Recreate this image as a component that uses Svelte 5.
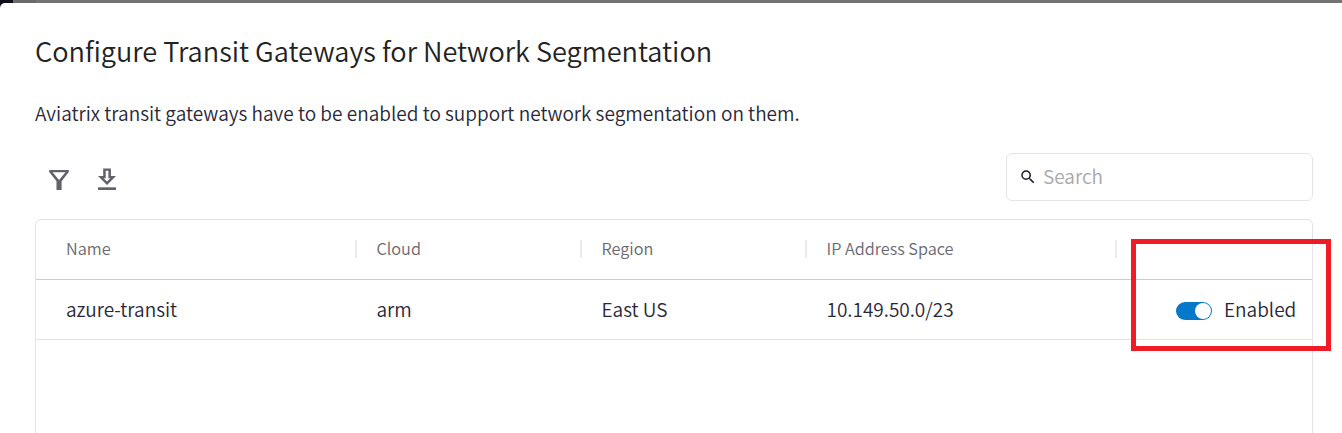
<script>
  const columns = ['Name', 'Cloud', 'Region', 'IP Address Space'];
  const gateways = [
    { name: 'azure-transit', cloud: 'arm', region: 'East US', cidr: '10.149.50.0/23', enabled: true }
  ];
</script>

<div class="page">
  <div class="backdrop"><i></i><b></b></div>
  <main class="dialog">
    <h1>Configure Transit Gateways for Network Segmentation</h1>
    <p>Aviatrix transit gateways have to be enabled to support network segmentation on them.</p>
    <div class="toolbar">
      <div class="tools">
        <svg width="24" height="24" viewBox="0 0 24 24" aria-label="Filter">
          <path fill-rule="evenodd" d="M2.2 2H21.8V4L14.6 13.2V22H9.5V13.2L2.2 4ZM5.6 4.2L12 12L18.5 4.2Z" fill="#63626b" />
        </svg>
        <svg width="24" height="24" viewBox="0 0 24 24" aria-label="Download">
          <path fill-rule="evenodd" d="M8.2 0.5H15.9V8H21L12 17L3 8H8.2ZM10.7 2.8V10.2H8.6L12 13.6L15.4 10.2H13.4V2.8Z" fill="#63626b" />
          <path d="M3 19.3H21V22H3Z" fill="#63626b" />
        </svg>
      </div>
      <label class="search">
        <svg width="18" height="18" viewBox="0 0 24 24" aria-hidden="true">
          <path fill="#1c1b29" d="M15.5 14h-.79l-.28-.27A6.47 6.47 0 0 0 16 9.5 6.5 6.5 0 1 0 9.5 16c1.61 0 3.09-.59 4.23-1.57l.27.28v.79l5 4.99L20.49 19l-4.99-5zm-6 0C7.01 14 5 11.99 5 9.5S7.01 5 9.5 5 14 7.01 14 9.5 11.99 14 9.5 14z" />
        </svg>
        <input type="text" placeholder="Search" />
      </label>
    </div>
    <section class="table">
      <div class="row head">
        {#each columns as column}
          <div class="cell">{column}</div>
        {/each}
        <div class="cell"></div>
      </div>
      {#each gateways as gateway}
        <div class="row">
          <div class="cell">{gateway.name}</div>
          <div class="cell">{gateway.cloud}</div>
          <div class="cell">{gateway.region}</div>
          <div class="cell">{gateway.cidr}</div>
          <div class="cell state">
            <span class="switch" class:on={gateway.enabled}></span>
            <span>{gateway.enabled ? 'Enabled' : 'Disabled'}</span>
          </div>
        </div>
      {/each}
      <div class="highlight"></div>
    </section>
  </main>
</div>

<style>
  :global(body) { background: #fff; overflow: hidden; }
  .page {
    height: 433px;
    overflow: hidden;
    box-sizing: border-box;
    padding-top: 3px;
    position: relative;
    font-family: "Noto Sans CJK SC", "Noto Sans", sans-serif;
    font-weight: 350;
    color: #28273a;
    font-size: 19px;
  }
  .backdrop {
    position: absolute;
    top: 0;
    left: 0;
    right: 0;
    height: 10px;
    display: flex;
    background: #747273;
  }
  .backdrop i { width: 13px; background: #120e1c; }
  .backdrop b { width: 23px; background: #6c6b6c; }
  .dialog {
    position: relative;
    height: 430px;
    box-sizing: border-box;
    padding: 28px 29px 0 35px;
    background: #fff;
    border-radius: 5px 0 0 0;
    display: flex;
    flex-direction: column;
  }
  h1, p { margin: 0; white-space: nowrap; font-weight: inherit; }
  h1 { font-size: 27.15px; line-height: 40px; color: #222; }
  p { font-size: 19.02px; line-height: 30px; margin-top: 27px; }
  .toolbar {
    margin-top: 25px;
    height: 48px;
    flex: none;
    display: flex;
    justify-content: space-between;
  }
  .tools { display: flex; gap: 24px; padding: 15px 0 0 12px; }
  .search {
    width: 307px;
    height: 48px;
    box-sizing: border-box;
    border: 1px solid #e5e5e8;
    border-radius: 6px;
    display: flex;
    align-items: center;
    padding: 0 12px;
    gap: 6px;
  }
  .search svg { flex: none; }
  .search input {
    flex: 1;
    min-width: 0;
    border: 0;
    padding: 0 0 2px;
    outline: 0;
    background: none;
    font: inherit;
    line-height: 30px;
    color: inherit;
  }
  .search input::placeholder { color: #a7a7aa; opacity: 1; }
  .table {
    position: relative;
    margin-top: 18px;
    height: 260px;
    flex: none;
    box-sizing: border-box;
    border: 1px solid #e3e3e9;
    border-radius: 6px;
  }
  .row {
    display: grid;
    grid-template-columns: 320px 225px 225px 310px 1fr;
    height: 60px;
    box-sizing: border-box;
    border-bottom: 1px solid #e3e3e7;
    align-items: center;
    padding-bottom: 1px;
  }
  .cell { padding-left: 20.5px; line-height: 30px; white-space: nowrap; }
  .cell:first-child { padding-left: 30px; }
  .head { font-size: 16.25px; color: #696871; border-bottom-color: #cdcdd7; }
  .head .cell { height: 18px; line-height: 16px; box-sizing: border-box; }
  .head .cell:not(:last-child) { border-right: 2px solid #e9e9f0; margin-right: -1px; }
  .state { display: flex; align-items: center; gap: 12px; padding-left: 60px; }
  .switch {
    width: 36px;
    height: 18px;
    box-sizing: border-box;
    padding: 1px;
    border-radius: 9px;
    background: #a5a5ad;
    display: flex;
    margin-top: 4px;
  }
  .switch::after { content: ''; width: 16px; height: 16px; border-radius: 50%; background: #fff; }
  .switch.on { background: #0678cb; justify-content: flex-end; }
  .highlight {
    position: absolute;
    left: 1095px;
    top: 19px;
    width: 200px;
    height: 112px;
    box-sizing: border-box;
    border: 5px solid #ef1c25;
  }
</style>
